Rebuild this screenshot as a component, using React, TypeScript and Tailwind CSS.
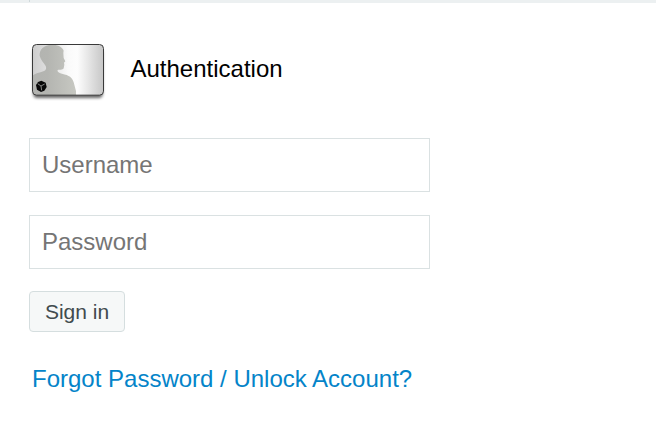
import React from 'react';

function BadgeIcon() {
  return (
    <svg className="w-[90px] h-[70px] shrink-0" viewBox="0 0 270 210" fill="none">
      <defs>
        <linearGradient id="card" x1="25" y1="0" x2="239" y2="0" gradientUnits="userSpaceOnUse">
          <stop offset="0" stopColor="#cdcdcd" />
          <stop offset="0.3" stopColor="#e6e6e6" />
          <stop offset="0.5" stopColor="#fafafa" />
          <stop offset="0.63" stopColor="#fdfdfd" />
          <stop offset="1" stopColor="#c6c6c6" />
        </linearGradient>
        <linearGradient id="person" x1="25" y1="0" x2="156" y2="0" gradientUnits="userSpaceOnUse">
          <stop offset="0" stopColor="#b2b3b0" />
          <stop offset="0.35" stopColor="#b4b5b1" />
          <stop offset="1" stopColor="#c7c8c2" />
        </linearGradient>
        <filter id="shadow" x="-10%" y="-10%" width="120%" height="130%">
          <feGaussianBlur stdDeviation="4" />
        </filter>
        <clipPath id="cardClip">
          <rect x="26" y="26" width="212" height="151" rx="11" />
        </clipPath>
      </defs>

      {/* card */}
      <rect x="28" y="40" width="208" height="146" rx="12" fill="#000" fillOpacity="0.6" filter="url(#shadow)" />
      <rect x="25.5" y="25.5" width="213" height="152" rx="12" fill="url(#card)" />

      {/* person */}
      <path
        d="M24 120 C34 112 47 110 58 106 C66 103 68 98 65 90 C60 82 50 72 47 60 C45 44 56 26 84 26 C104 26 116 34 119 44 C117 52 119 60 119 66 L124 76 L120 80 L121 86 L119 97 C115 103 107 101 101 102 C99 108 106 111 114 113 C136 118 145 124 149 139 L156 165 L156 178 L24 178 Z"
        fill="url(#person)"
        clipPath="url(#cardClip)"
      />

      {/* seal */}
      <path d="M52 134 L65 140 L68 153 L61 164 L51 168 L39 161 L36 147 L42 138 Z" fill="#080808" />
      <path d="M41 143 L51 150 L62 144 M51 150 L53 163" stroke="#a5a6a3" strokeWidth="2.4" />

      <rect x="25.5" y="25.5" width="213" height="152" rx="12" stroke="#3a3a3a" strokeWidth="3" />
    </svg>
  );
}

export default function App() {
  return (
    <div className="h-[443px] bg-white font-['Liberation_Sans',Arial,sans-serif] overflow-hidden">
      {/* top strip */}
      <div className="h-[3px] bg-[#ecf0f1] pl-[29px]">
        <div className="w-px h-[2px] bg-[#d0d9db]"></div>
      </div>

      {/* heading */}
      <div className="flex items-center pl-6 pt-[33px]">
        <BadgeIcon />
        <h1 className="ml-[16.5px] -mt-1 text-2xl text-black">Authentication</h1>
      </div>

      {/* login form */}
      <form className="flex flex-col items-start pl-[29px] pt-8" onSubmit={(e) => e.preventDefault()}>
        <input
          type="text"
          placeholder="Username"
          className="w-[401px] h-[54px] px-3 text-2xl border border-[#dae1e2] bg-white placeholder:text-[#757575] outline-none"
        />
        <input
          type="password"
          placeholder="Password"
          className="w-[401px] h-[54px] mt-[23px] px-3 text-2xl border border-[#dae1e2] bg-white placeholder:text-[#757575] outline-none"
        />
        <button
          type="submit"
          className="w-24 h-[41px] mt-[22px] text-[21px] text-[#414b4e] bg-[#f6f8f8] border border-[#d5dedf] rounded"
        >
          Sign in
        </button>
        <a href="#" className="mt-[31px] ml-[3px] text-2xl text-[#0484c9]">
          Forgot Password / Unlock Account?
        </a>
      </form>
    </div>
  );
}
